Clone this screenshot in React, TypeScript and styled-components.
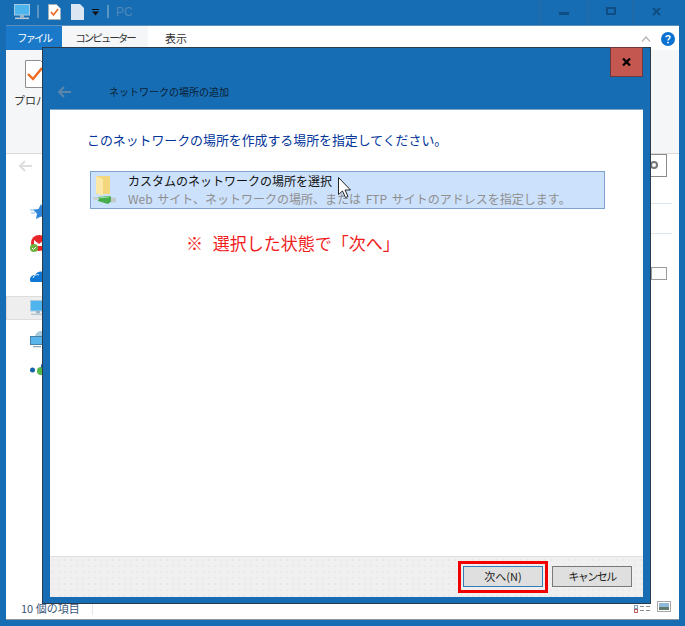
import React from "react";
import styled, { createGlobalStyle } from "styled-components";

const GlobalStyle = createGlobalStyle`
  html, body {
    margin: 0;
    padding: 0;
    background: #176db3;
  }
  * {
    box-sizing: border-box;
  }
`;

const FONT = `"Noto Sans CJK JP", "Noto Sans", sans-serif`;

const Frame = styled.div`
  position: relative;
  width: 685px;
  height: 626px;
  overflow: hidden;
  background: #176db3;
  font-family: ${FONT};
  display: flex;
  flex-direction: column;
`;

/* explorer window behind the dialog */
const TitleBar = styled.div`
  height: 26px;
  flex: none;
  display: flex;
  align-items: flex-start;
  border-bottom: 1px solid #5c90ba;
  margin-left: 6px;
  margin-right: 6px;
  padding-left: 8px;
`;

const QuickIcon = styled.div<{ $gap: number }>`
  margin-right: ${(p) => p.$gap}px;
  margin-top: 4px;
  height: 16px;
  display: flex;
  align-items: center;
`;

const QuickSep = styled.div`
  width: 2px;
  height: 13px;
  margin-top: 5px;
  margin-right: 9px;
  background: #5a94c2;
`;

const WinTitle = styled.div`
  font-family: "Liberation Sans", sans-serif;
  font-size: 12px;
  line-height: 14px;
  margin-top: 5px;
  margin-left: -2px;
  color: #4d88b9;
`;

const WinButtons = styled.div`
  margin-left: auto;
  display: flex;
  height: 25px;
`;

const WinButton = styled.div<{ $w: number }>`
  width: ${(p) => p.$w}px;
  height: 25px;
  border-left: 1px solid #2b6a9f;
  display: flex;
  justify-content: center;
  padding-top: 7px;
`;

const Client = styled.div`
  flex: 1;
  margin: 0 6px 6px;
  display: flex;
  flex-direction: column;
  background: #fff;
  border-bottom: 1px solid #8d9aa5;
`;

const TabStrip = styled.div`
  height: 24px;
  flex: none;
  display: flex;
  align-items: stretch;
  padding-right: 4px;
`;

const Tab = styled.div<{ $kind: "file" | "active" | "plain" }>`
  font-size: ${(p) => (p.$kind === "plain" ? 11 : 10.5)}px;
  letter-spacing: ${(p) => (p.$kind === "plain" ? 0 : -2)}px;
  line-height: 24px;
  text-align: center;
  width: ${(p) => (p.$kind === "file" ? 56 : p.$kind === "active" ? 86 : 56)}px;
  color: ${(p) => (p.$kind === "file" ? "#fff" : "#333")};
  background: ${(p) =>
    p.$kind === "file" ? "#1a79c9" : p.$kind === "active" ? "#f5f6f7" : "#fff"};
`;

const TabRight = styled.div`
  margin-left: auto;
  display: flex;
  align-items: center;
  gap: 10px;
  padding-top: 2px;
`;

const Ribbon = styled.div`
  height: 104px;
  flex: none;
  background: #f5f6f7;
  border-bottom: 1px solid #dadbdc;
  padding: 10px 0 0 8px;
`;

const RibbonAction = styled.div`
  width: 50px;
  display: flex;
  flex-direction: column;
  align-items: flex-start;
`;

const RibbonIconBox = styled.div`
  margin-left: 11px;
  height: 28px;
`;

const RibbonLabel = styled.div`
  font-size: 11px;
  line-height: 14px;
  margin-top: 5px;
  color: #333;
  white-space: nowrap;
`;

const Main = styled.div`
  flex: 1;
  display: flex;
  justify-content: space-between;
  min-height: 0;
`;

const Sidebar = styled.div`
  width: 60px;
  display: flex;
  flex-direction: column;
`;

const BackArrow = styled.div`
  height: 46px;
  display: flex;
  align-items: flex-start;
  padding: 6px 0 0 13px;
`;

const NavItem = styled.div<{ $h: number; $selected?: boolean }>`
  height: ${(p) => p.$h}px;
  flex: none;
  display: flex;
  align-items: center;
  background: ${(p) => (p.$selected ? "#eeeeee" : "transparent")};
  border: ${(p) => (p.$selected ? "1px solid #dcdcdc" : "none")};
  padding-left: ${(p) => (p.$selected ? 23 : 24)}px;
  margin-top: ${(p) => (p.$selected ? 8 : 0)}px;
`;

const RightPane = styled.div`
  width: 28px;
  display: flex;
  flex-direction: column;
`;

const SearchBox = styled.div`
  width: 17px;
  height: 23px;
  margin-left: -1px;
  border: 1px solid #8a8a8a;
  background: #fff;
`;

const SearchRing = styled.div`
  width: 8px;
  height: 8px;
  margin-top: 6px;
  margin-left: -1px;
  border: 2px solid #777;
  border-radius: 50%;
`;

const Rule = styled.div<{ $top: number }>`
  width: 21px;
  height: 1px;
  margin-top: ${(p) => p.$top}px;
  background: #dde5ec;
`;

const ColumnBox = styled.div`
  width: 16px;
  height: 13px;
  margin-top: 33px;
  border: 1px solid #9a9a9a;
  background: #fcfcfc;
`;

const StatusBar = styled.div`
  height: 20px;
  flex: none;
  display: flex;
  align-items: center;
  padding: 0 8px 0 15px;
`;

const StatusText = styled.div`
  font-size: 11px;
  line-height: 14px;
  margin-top: -3px;
  color: #3d5578;
`;

const StatusDivider = styled.div`
  width: 1px;
  height: 12px;
  margin-left: 12px;
  background: #e6e6e6;
`;

const ViewIcons = styled.div`
  margin-left: auto;
  display: flex;
  align-items: center;
  gap: 7px;
`;

const ThumbIcon = styled.svg`
  margin-top: -6px;
`;

/* wizard dialog, lies over the explorer */
const Dialog = styled.div`
  position: absolute;
  left: 42px;
  top: 47px;
  width: 609px;
  height: 557px;
  background: #176db3;
  border: 1px solid #2a3b4c;
  padding: 0 7px 6px 7px;
  display: flex;
  flex-direction: column;
`;

const DialogHead = styled.div`
  height: 61px;
  flex: none;
  position: relative;
  display: flex;
  align-items: flex-end;
  padding-bottom: 9px;
`;

const CloseButton = styled.div`
  position: absolute;
  right: 0;
  top: -1px;
  width: 33px;
  height: 30px;
  background: #c4574f;
  border: 1px solid #6c3a3c;
  display: flex;
  align-items: center;
  justify-content: center;
`;

const HeadBack = styled.div`
  width: 59px;
  padding-left: 8px;
  display: flex;
  align-items: center;
  height: 16px;
`;

const HeadTitle = styled.div`
  font-size: 10px;
  line-height: 16px;
  color: #0a1f33;
`;

const DialogBody = styled.div`
  flex: 1;
  background: #fff;
  border-top: 1px solid #7ea6c9;
  padding: 20px 38px 0 37px;
  display: flex;
  flex-direction: column;
`;

const Instruction = styled.div`
  font-size: 12.9px;
  line-height: 20px;
  color: #003399;
  white-space: nowrap;
`;

const Choice = styled.div`
  position: relative;
  margin-top: 21px;
  margin-left: 3px;
  height: 38px;
  background: #cce1fb;
  border: 1px solid #7da2ce;
  display: flex;
  padding-left: 1px;
`;

const ChoiceIcon = styled.div`
  width: 36px;
  flex: none;
  padding-top: 2px;
  display: flex;
  align-items: flex-start;
`;

const ChoiceText = styled.div`
  display: flex;
  flex-direction: column;
  white-space: nowrap;
`;

const ChoiceTitle = styled.div`
  font-size: 12px;
  line-height: 18px;
  color: #111;
`;

const ChoiceSub = styled.div`
  font-size: 12px;
  line-height: 18px;
  word-spacing: 2px;
  color: #8f8f8f;
`;

const Cursor = styled.svg`
  position: absolute;
  left: 247px;
  top: 5px;
`;

const Note = styled.div`
  margin: 24px 0 0 99px;
  font-size: 17px;
  line-height: 20px;
  word-spacing: 6px;
  color: #f01d1d;
  white-space: pre;
`;

const DialogFoot = styled.div`
  height: 41px;
  flex: none;
  background-color: #f0f0f0;
  background-image: radial-gradient(#e9e9e9 1px, transparent 1px);
  background-size: 6px 6px;
  border-top: 1px solid #dfdfdf;
  display: flex;
  justify-content: flex-end;
  align-items: flex-start;
  padding: 9px 11px 0 0;
  gap: 9px;
`;

const FootButton = styled.div<{ $primary?: boolean }>`
  position: relative;
  width: 80px;
  height: 21px;
  background: #dfdfdf;
  border: 1px solid ${(p) => (p.$primary ? "#2f7db8" : "#7a7a7a")};
  font-size: 11px;
  letter-spacing: ${(p) => (p.$primary ? 0 : -1.5)}px;
  line-height: 19px;
  text-align: center;
  color: #222;
`;

const Highlight = styled.div`
  position: absolute;
  left: -6px;
  top: -6px;
  width: 90px;
  height: 32px;
  border: 3px solid #f00000;
`;

const PcIcon = ({ w = 16 }: { w?: number }) => (
  <svg width={w} height={w} viewBox="0 0 16 16">
    <rect x="0.5" y="0.5" width="15" height="10.5" fill="#4db4ee" stroke="#a8cbe2" />
    <rect x="6" y="11" width="4" height="2.5" fill="#9fb6c6" />
    <rect x="1" y="13.5" width="14" height="1.6" fill="#b9cad6" />
  </svg>
);

const DocCheck = () => (
  <svg width="13" height="16" viewBox="0 0 13 16">
    <path d="M.5.5h8l4 4v11H.5z" fill="#fff" stroke="#a4b0ba" />
    <path d="M3 8l2.5 3L10 5" fill="none" stroke="#ef6a21" strokeWidth="1.7" />
  </svg>
);

const FolderLink = () => (
  <svg width="26" height="32" viewBox="0 0 26 32">
    <path d="M4 2h14v18H4z" fill="#f4d67c" />
    <path d="M4 2l7 3v17l-7-3z" fill="#fbe8a6" />
    <path d="M6 23l12-1 3 4-5 4-10-3z" fill="#46ae4c" />
    <path d="M6 24l11-1" stroke="#9adf9c" strokeWidth="1" />
    <path d="M0 23l6 0 1 3-5 0z" fill="#c9d0d4" />
    <path d="M19 23l5 1v4l-5 1z" fill="#c3cacf" />
  </svg>
);

export default function App() {
  return (
    <Frame>
      <GlobalStyle />
      <TitleBar>
        <QuickIcon $gap={7}>
          <PcIcon />
        </QuickIcon>
        <QuickSep />
        <QuickIcon $gap={10}>
          <DocCheck />
        </QuickIcon>
        <QuickIcon $gap={8}>
          <svg width="13" height="16" viewBox="0 0 13 16">
            <path d="M0 0h9l4 4v12H0z" fill="#dce6f3" />
          </svg>
        </QuickIcon>
        <QuickIcon $gap={8}>
          <svg width="7" height="7" viewBox="0 0 7 7">
            <rect x="0" y="0" width="7" height="1" fill="#111" />
            <path d="M0 2.5h7L3.5 6.5z" fill="#111" />
          </svg>
        </QuickIcon>
        <QuickSep />
        <WinTitle>PC</WinTitle>
        <WinButtons>
          <WinButton $w={47}>
            <svg width="10" height="12" viewBox="0 0 10 12">
              <rect x="0" y="5" width="10" height="3" fill="#0f4d82" />
            </svg>
          </WinButton>
          <WinButton $w={46}>
            <svg width="10" height="8" viewBox="0 0 10 8">
              <rect x="1" y="1" width="8" height="6" fill="none" stroke="#0f4d82" strokeWidth="2" />
            </svg>
          </WinButton>
          <WinButton $w={46}>
            <svg width="9" height="9" viewBox="0 0 9 9">
              <path d="M1 1l7 7M8 1L1 8" stroke="#0f4d82" strokeWidth="2" />
            </svg>
          </WinButton>
        </WinButtons>
      </TitleBar>
      <Client>
        <TabStrip>
          <Tab $kind="file">ファイル</Tab>
          <Tab $kind="active">コンピューター</Tab>
          <Tab $kind="plain">表示</Tab>
          <TabRight>
            <svg width="10" height="6" viewBox="0 0 10 6">
              <path d="M1 5.500L5 1l4 4.500" fill="none" stroke="#b5b5b5" strokeWidth="1.2" />
            </svg>
            <svg width="14" height="14" viewBox="0 0 14 14">
              <circle cx="7" cy="7" r="7" fill="#0b72d2" />
              <path
                d="M5 5.200C5 3.200 9 3.200 9 5.300 9 6.800 7 6.700 7 8.600"
                fill="none"
                stroke="#fff"
                strokeWidth="1.5"
              />
              <rect x="6.2" y="9.800" width="1.6" height="1.6" fill="#fff" />
            </svg>
          </TabRight>
        </TabStrip>
        <Ribbon>
          <RibbonAction>
            <RibbonIconBox>
              <svg width="22" height="28" viewBox="0 0 22 28">
                <path d="M.5.5h15l6 6v21H.5z" fill="#fff" stroke="#8e8e8e" />
                <path d="M3 14l5 5L17 8" fill="none" stroke="#ef6a21" strokeWidth="2.4" />
              </svg>
            </RibbonIconBox>
            <RibbonLabel>プロパティ</RibbonLabel>
          </RibbonAction>
        </Ribbon>
        <Main>
          <Sidebar>
            <BackArrow>
              <svg width="13" height="12" viewBox="0 0 13 12">
                <path d="M6 1L1 6l5 5M1 6h12" fill="none" stroke="#dddddd" strokeWidth="2" />
              </svg>
            </BackArrow>
            <NavItem $h={24}>
              <svg width="22" height="16" viewBox="0 0 22 16">
                <path d="M11 0l2.500 5 5.500.8-4 3.900 1 5.300-5-2.600L6 15l1-5.300-4-3.900 5.500-.8z" fill="#2f86d8" />
                <path d="M0 6h5M1 9h4" stroke="#7dbcef" strokeWidth="1" />
              </svg>
            </NavItem>
            <NavItem $h={40}>
              <svg width="22" height="18" viewBox="0 0 22 18">
                <circle cx="9" cy="8" r="8" fill="#e8262a" />
                <path d="M4 5l5 4 5-4v6H4z" fill="#fff" />
                <circle cx="4" cy="13" r="4" fill="#6db33f" />
                <path d="M2 13l1.500 1.500L6 12" fill="none" stroke="#fff" />
              </svg>
            </NavItem>
            <NavItem $h={24}>
              <svg width="24" height="12" viewBox="0 0 24 12">
                <path d="M0 10c0-4 3-5 5-5 2-4 9-5 12 0 3 0 6 2 6 7H2c-1 0-2 0-2-2z" fill="#0f78d4" />
                <path d="M3 8c1-3 4-4 6-3" fill="none" stroke="#fff" />
              </svg>
            </NavItem>
            <NavItem $h={24} $selected>
              <PcIcon />
            </NavItem>
            <NavItem $h={39}>
              <svg width="18" height="17" viewBox="0 0 18 17">
                <circle cx="11" cy="6" r="6" fill="#a8c9de" />
                <rect x="0.5" y="5.500" width="12" height="8" fill="#58b4ea" stroke="#4782a8" />
                <rect x="3" y="15" width="8" height="1.2" fill="#8aa2b2" />
              </svg>
            </NavItem>
            <NavItem $h={22}>
              <svg width="24" height="14" viewBox="0 0 24 14">
                <circle cx="2.500" cy="7" r="2.500" fill="#1763a8" />
                <circle cx="11" cy="8" r="4" fill="#53b848" />
                <circle cx="14" cy="3" r="3" fill="#1763a8" />
              </svg>
            </NavItem>
          </Sidebar>
          <RightPane>
            <SearchBox>
              <SearchRing />
            </SearchBox>
            <Rule $top={26} />
            <Rule $top={29} />
            <ColumnBox />
          </RightPane>
        </Main>
        <StatusBar>
          <StatusText>10 個の項目</StatusText>
          <StatusDivider />
          <ViewIcons>
            <svg width="16" height="8" viewBox="0 0 16 8">
              <rect x="0.5" y="0.5" width="3" height="3" fill="#fff" stroke="#7fa2c0" />
              <rect x="0.5" y="4.500" width="3" height="3" fill="#fff" stroke="#c06060" />
              <path d="M6 1.500h4M12 1.500h4M6 5.500h4M12 5.500h4" stroke="#8a8a8a" />
            </svg>
            <ThumbIcon width="14" height="11" viewBox="0 0 14 11">
              <rect x="0.5" y="0.5" width="13" height="10" fill="#fff" stroke="#a5a5a5" />
              <rect x="2" y="2" width="10" height="4" fill="#8fb7d6" />
              <rect x="2" y="6" width="10" height="3" fill="#5e7a6a" />
            </ThumbIcon>
          </ViewIcons>
        </StatusBar>
      </Client>

      <Dialog>
        <DialogHead>
          <CloseButton>
            <svg width="9" height="8" viewBox="0 0 9 8">
              <path d="M1 .5l7 7M8 .5l-7 7" stroke="#000" strokeWidth="2.2" />
            </svg>
          </CloseButton>
          <HeadBack>
            <svg width="13" height="12" viewBox="0 0 13 12">
              <path d="M6 1L1 6l5 5M1 6h12" fill="none" stroke="#5b86aa" strokeWidth="2" />
            </svg>
          </HeadBack>
          <HeadTitle>ネットワークの場所の追加</HeadTitle>
        </DialogHead>
        <DialogBody>
          <Instruction>このネットワークの場所を作成する場所を指定してください。</Instruction>
          <Choice>
            <ChoiceIcon>
              <FolderLink />
            </ChoiceIcon>
            <ChoiceText>
              <ChoiceTitle>カスタムのネットワークの場所を選択</ChoiceTitle>
              <ChoiceSub>Web サイト、ネットワークの場所、または FTP サイトのアドレスを指定します。</ChoiceSub>
            </ChoiceText>
            <Cursor width="13" height="21" viewBox="0 0 13 21">
              <path
                d="M.5.5v17l4-3.500 3 6.500 2.500-1-3-6.500h5.500z"
                fill="#fff"
                stroke="#222"
                strokeWidth="1"
              />
            </Cursor>
          </Choice>
          <Note>※ 選択した状態で「次へ」</Note>
        </DialogBody>
        <DialogFoot>
          <FootButton $primary>
            次へ(N)
            <Highlight />
          </FootButton>
          <FootButton>キャンセル</FootButton>
        </DialogFoot>
      </Dialog>
    </Frame>
  );
}
